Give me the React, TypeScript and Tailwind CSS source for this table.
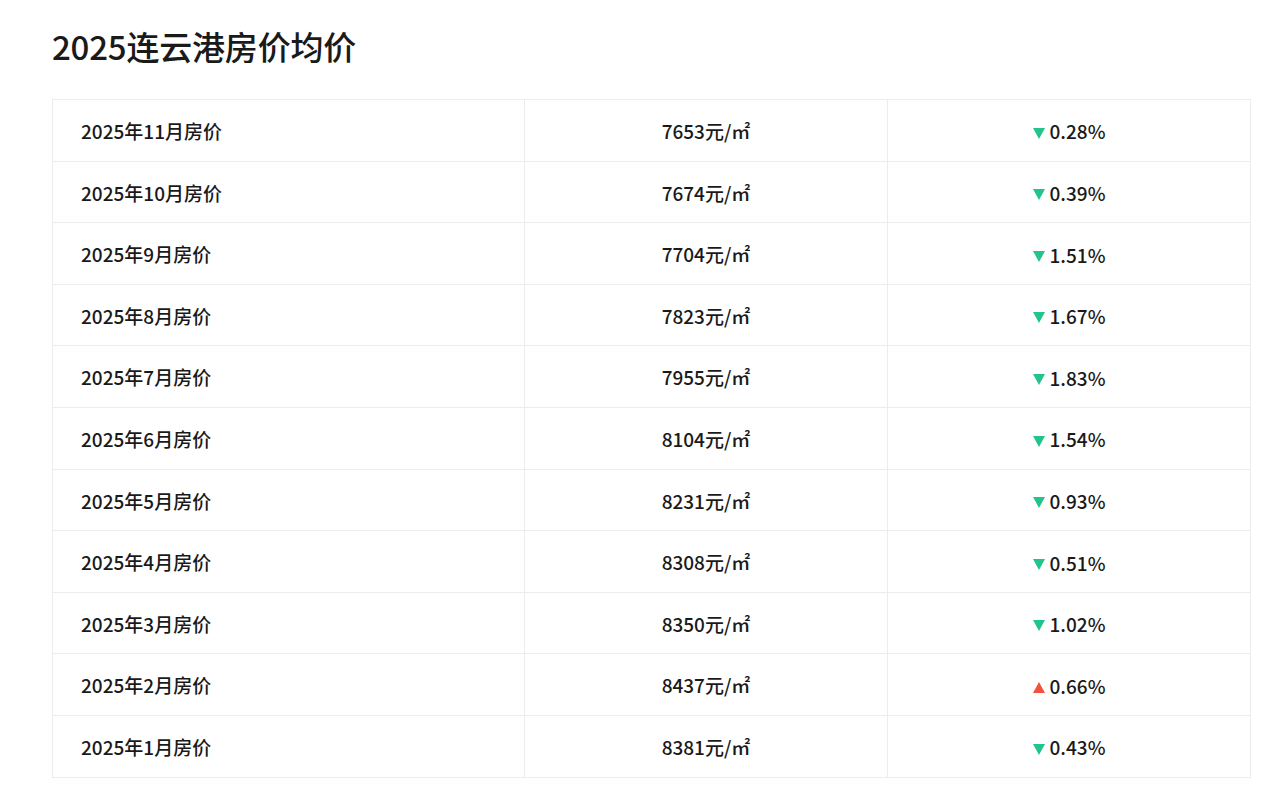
import React from "react";

const rows = [
  { m: "2025年11月房价", p: "7653元/㎡", up: false, c: "0.28%" },
  { m: "2025年10月房价", p: "7674元/㎡", up: false, c: "0.39%" },
  { m: "2025年9月房价", p: "7704元/㎡", up: false, c: "1.51%" },
  { m: "2025年8月房价", p: "7823元/㎡", up: false, c: "1.67%" },
  { m: "2025年7月房价", p: "7955元/㎡", up: false, c: "1.83%" },
  { m: "2025年6月房价", p: "8104元/㎡", up: false, c: "1.54%" },
  { m: "2025年5月房价", p: "8231元/㎡", up: false, c: "0.93%" },
  { m: "2025年4月房价", p: "8308元/㎡", up: false, c: "0.51%" },
  { m: "2025年3月房价", p: "8350元/㎡", up: false, c: "1.02%" },
  { m: "2025年2月房价", p: "8437元/㎡", up: true, c: "0.66%" },
  { m: "2025年1月房价", p: "8381元/㎡", up: false, c: "0.43%" },
];

export default function App() {
  return (
    <div
      className="bg-white min-h-[805px] w-[1280px] text-[#1a1a1a]"
      style={{ fontFamily: '"Noto Sans CJK SC", "Noto Sans", sans-serif' }}
    >
      <div className="pl-[52px] pr-[29px] pt-[24px]">
        <h1 className="text-[33px] leading-[44px] font-medium tracking-[-0.2px]">2025连云港房价均价</h1>
        <table className="mt-[31px] w-full border-collapse border border-[#ececec] text-[19px] font-medium">
          <tbody>
            {rows.map((r) => (
              <tr key={r.m} className="h-[61.6px]">
                <td className="border border-[#ececec] w-[472px] pl-[28px] pt-[2px] text-left">{r.m}</td>
                <td className="border border-[#ececec] w-[363px] pt-[2px] text-center">{r.p}</td>
                <td className="border border-[#ececec] pt-[2px] text-center">
                  <span className="inline-flex items-center gap-[5px]">
                    {r.up ? (
                      <svg width="12" height="11" viewBox="0 0 12 11" className="mt-[3px]">
                        <polygon points="6,0 12,11 0,11" fill="#f4523b" />
                      </svg>
                    ) : (
                      <svg width="12" height="11" viewBox="0 0 12 11" className="mt-[3px]">
                        <polygon points="0,0 12,0 6,11" fill="#23c48b" />
                      </svg>
                    )}
                    <span>{r.c}</span>
                  </span>
                </td>
              </tr>
            ))}
          </tbody>
        </table>
      </div>
    </div>
  );
}
